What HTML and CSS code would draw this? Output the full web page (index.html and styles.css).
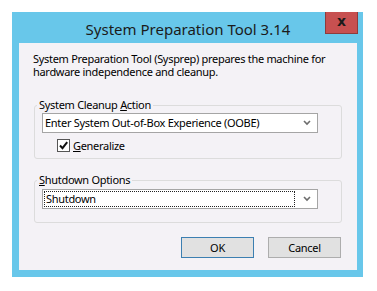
FILE: index.html
```html
<!DOCTYPE html>
<html lang="en">
<head>
    <meta charset="UTF-8">
    <title>System Preparation Tool 3.14</title>
    <link rel="stylesheet" href="styles.css">
</head>
<body>
    <div class="window">
        <div class="titlebar">
            <div class="title">System Preparation Tool 3.14</div>
            <div class="close">x</div>
        </div>
        <div class="content">
            <p class="intro">System Preparation Tool (Sysprep) prepares the machine for hardware independence and cleanup.</p>

            <fieldset class="group">
                <legend>System Cleanup <u>A</u>ction</legend>
                <div class="combo">
                    <span class="combo-text">Enter System Out-of-Box Experience (OOBE)</span>
                    <svg class="chevron" width="8" height="6" viewBox="0 0 8 6"><path d="M1 1 L4 4 L7 1" fill="none" stroke="#6d6d6d" stroke-width="1.6"/></svg>
                </div>
                <div class="check-row">
                    <span class="checkbox">
                        <svg width="11" height="11" viewBox="0 0 11 11"><path d="M2 5.5 L4.5 8.2 L9.2 2.2" fill="none" stroke="#111" stroke-width="2"/></svg>
                    </span>
                    <span><u>G</u>eneralize</span>
                </div>
            </fieldset>

            <fieldset class="group group-shutdown">
                <legend><u>S</u>hutdown Options</legend>
                <div class="combo">
                    <span class="combo-text focused">Shutdown</span>
                    <svg class="chevron" width="8" height="6" viewBox="0 0 8 6"><path d="M1 1 L4 4 L7 1" fill="none" stroke="#6d6d6d" stroke-width="1.6"/></svg>
                </div>
            </fieldset>

            <div class="buttons">
                <button class="btn btn-default">OK</button>
                <button class="btn">Cancel</button>
            </div>
        </div>
    </div>
</body>
</html>
```

FILE: styles.css
```css
body { margin: 0; padding: 12px; background: #fff; font-family: "Noto Sans", sans-serif; color: #000; }
.window { width: 351px; height: 265px; box-sizing: border-box; background: #68c7ea; padding: 0 6px 7px 7px; display: flex; flex-direction: column; }
.titlebar { height: 31px; display: grid; grid-template-columns: 1fr auto 1fr; align-items: start; }
.title { grid-column: 2; padding-top: 6px; font-size: 15px; line-height: 22px; color: #1b1b1b; white-space: nowrap; }
.close { grid-column: 3; justify-self: end; margin-right: -1px; width: 33px; height: 22px; box-sizing: border-box; background: #c75050; border: 1px solid #8e3b3b; border-top: 0; font: bold 14px/19px "DejaVu Sans", sans-serif; text-align: center; color: #1a1a1a; }
.content { flex: 1; background: #f4f2f6; padding: 9px 15px 0 14px; font-size: 11px; letter-spacing: -0.3px; }
.intro { margin: 0; line-height: 13px; }
.group { margin: 20px 0 0 1px; padding: 1px 0 6px 0; border: 1px solid #dcdcdc; border-radius: 3px; }
.group legend { margin-left: 2px; padding: 0 2px; line-height: 14px; }
.group-shutdown { margin-top: 14px; padding-top: 2px; padding-bottom: 13px; }
.combo { margin-left: 7px; width: 276px; height: 20px; box-sizing: border-box; background: #fff; border: 1px solid #a5a5a5; display: flex; align-items: center; justify-content: space-between; }
.combo-text { padding-left: 2px; line-height: 16px; white-space: nowrap; }
.combo-text.focused { margin-left: 1px; width: 251px; padding-left: 1px; box-sizing: border-box; border: 1px dotted #222; line-height: 14px; }
.chevron { margin-right: 6px; }
.check-row { margin: 6px 0 0 22px; display: flex; align-items: center; gap: 3px; height: 13px; }
.checkbox { width: 13px; height: 13px; box-sizing: border-box; background: #fff; border: 1px solid #555; display: flex; align-items: center; justify-content: center; }
.buttons { margin-top: 14px; margin-right: 1px; display: flex; justify-content: flex-end; gap: 14px; }
.btn { width: 73px; height: 21px; padding: 0; background: #e1e1e1; border: 1px solid #adadad; font: 11px "Noto Sans", sans-serif; letter-spacing: -0.3px; color: #000; }
.btn-default { border-color: #3c7fb1; }
```
